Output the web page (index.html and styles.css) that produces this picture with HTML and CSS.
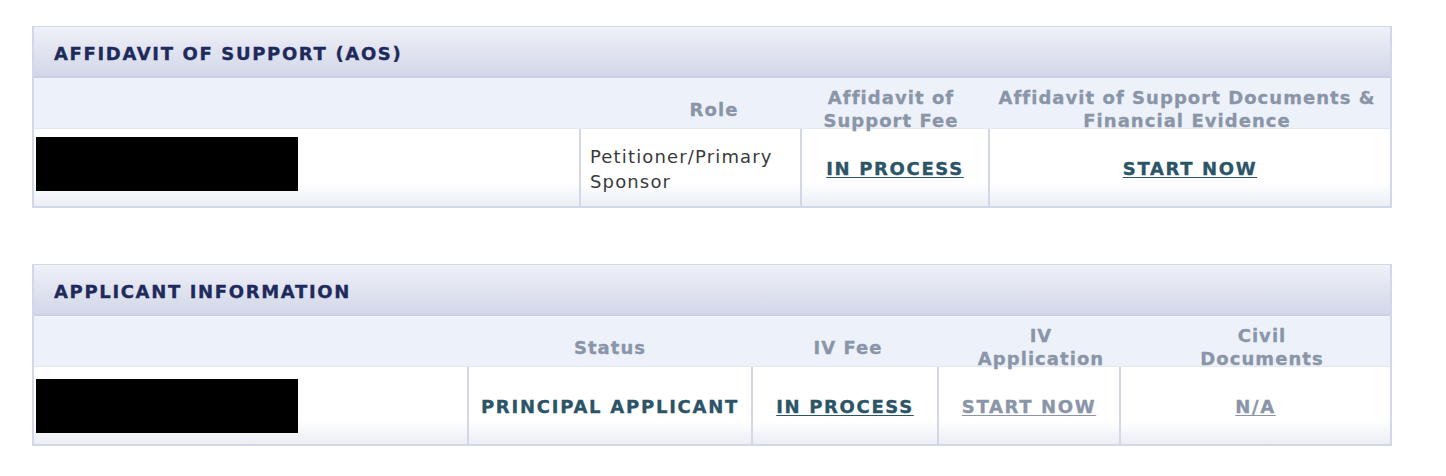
FILE: index.html
```html
<!DOCTYPE html>
<html>
<head>
<meta charset="utf-8">
<link rel="stylesheet" href="styles.css">
</head>
<body>
<div class="page">
  <section class="panel panel-aos">
    <div class="panel-title">AFFIDAVIT OF SUPPORT (AOS)</div>
    <div class="colhead">
      <div class="ch"></div>
      <div class="ch">Role</div>
      <div class="ch">Affidavit of<br>Support Fee</div>
      <div class="ch">Affidavit of Support Documents &amp;<br>Financial Evidence</div>
    </div>
    <div class="datarow">
      <div class="cell cell-name"><div class="redact"></div></div>
      <div class="cell cell-left">Petitioner/Primary<br>Sponsor</div>
      <div class="cell"><a class="link" href="#">IN PROCESS</a></div>
      <div class="cell"><a class="link" href="#">START NOW</a></div>
    </div>
  </section>

  <section class="panel panel-app">
    <div class="panel-title">APPLICANT INFORMATION</div>
    <div class="colhead">
      <div class="ch"></div>
      <div class="ch">Status</div>
      <div class="ch">IV Fee</div>
      <div class="ch">IV<br>Application</div>
      <div class="ch">Civil<br>Documents</div>
    </div>
    <div class="datarow">
      <div class="cell cell-name"><div class="redact"></div></div>
      <div class="cell"><span class="status">PRINCIPAL APPLICANT</span></div>
      <div class="cell"><a class="link" href="#">IN PROCESS</a></div>
      <div class="cell"><a class="link link-muted" href="#">START NOW</a></div>
      <div class="cell"><a class="link link-muted" href="#">N/A</a></div>
    </div>
  </section>
</div>
</body>
</html>
```

FILE: styles.css
```css
* { box-sizing: border-box; }
html, body { margin: 0; padding: 0; background: #fff; }
body {
  font-family: "DejaVu Sans", Verdana, sans-serif;
  font-size: 18px;
  color: #333;
}
.page {
  padding: 26px 54px 0 32px;
  display: flex;
  flex-direction: column;
  gap: 56px;
  width: 1446px;
}
.panel {
  width: 1360px;
  border: 2px solid #d3d8e8;
  border-top-width: 1px;
  background: #fff;
}
.panel-title {
  height: 51px;
  display: flex;
  align-items: center;
  padding-left: 20px;
  padding-top: 3px;
  font-weight: bold;
  letter-spacing: 1.65px;
  -webkit-text-stroke: 0.35px currentColor;
  color: #1f2a5c;
  background: linear-gradient(#eff1f8, #d2d7e8);
  border-bottom: 2px solid #cbd1e4;
}
.colhead {
  display: grid;
  height: 51px;
  padding-top: 8px;
  background: #edf1fa;
  align-items: center;
  border-bottom: 1px solid #e4e8f3;
}
.panel-aos .colhead { grid-template-columns: 596px 168px 186px 406px; }
.panel-app .colhead { grid-template-columns: 438px 276px 200px 186px 256px; }
.ch {
  text-align: center;
  font-weight: bold;
  color: #8a95a8;
  line-height: 23px;
  letter-spacing: 1.05px;
  -webkit-text-stroke: 0.3px currentColor;
}
.datarow {
  display: grid;
  height: 77px;
  background: linear-gradient(#ffffff 0, #ffffff 70%, #eceef5 100%);
}
.panel-aos .datarow { grid-template-columns: 545px 221px 188px 402px; }
.panel-app .datarow { grid-template-columns: 433px 284px 186px 182px 271px; }
.cell {
  border-left: 2px solid #d3d8e8;
  display: flex;
  align-items: center;
  justify-content: center;
  line-height: 25px;
  padding-top: 2px;
}
.cell-name {
  border-left: none;
  justify-content: flex-start;
  padding: 0 0 0 2px;
}
.cell-left {
  justify-content: flex-start;
  padding-left: 9px;
  color: #3a3a3a;
  letter-spacing: 1.15px;
}
.redact {
  width: 262px;
  height: 54px;
  background: #000;
}
.panel-aos .cell-name { align-items: flex-start; padding-top: 8px; }
.link {
  font-weight: bold;
  color: #2b5466;
  letter-spacing: 1.65px;
  -webkit-text-stroke: 0.35px currentColor;
  text-decoration: underline;
  text-underline-offset: 2px;
}
.link-muted { color: #8a95a8; }
.status {
  font-weight: bold;
  color: #2b5466;
  letter-spacing: 1.75px;
  -webkit-text-stroke: 0.35px currentColor;
}
```
